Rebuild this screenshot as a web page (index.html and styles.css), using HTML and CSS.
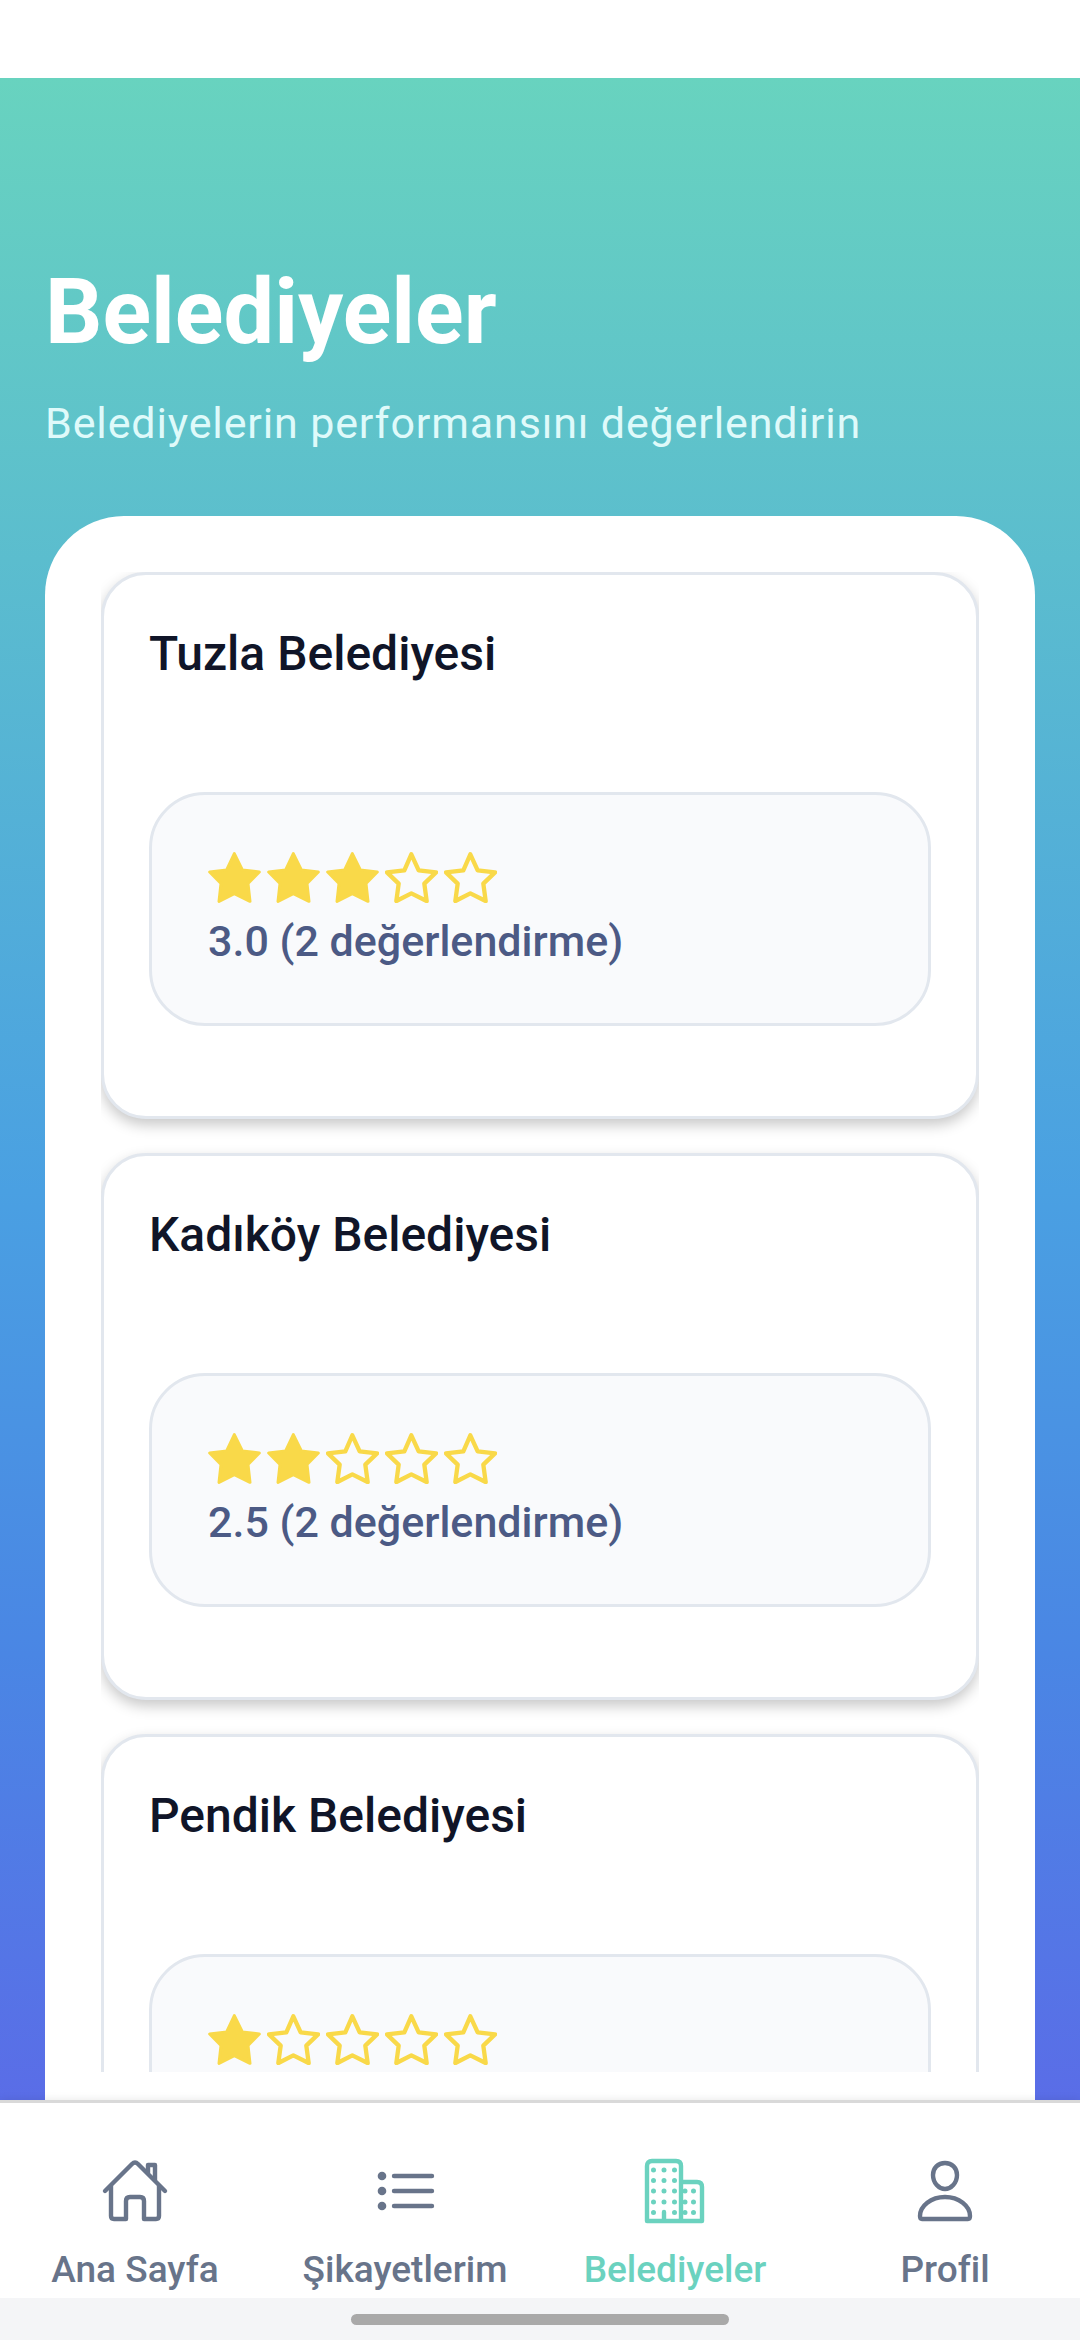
FILE: index.html
```html
<!DOCTYPE html>
<html lang="tr">
<head>
<meta charset="utf-8">
<meta name="viewport" content="width=device-width, initial-scale=1">
<title>Belediyeler</title>
<link rel="stylesheet" href="styles.css">
</head>
<body>
<svg class="defs" aria-hidden="true">
  <symbol id="star-full" viewBox="0 0 159 153">
    <path class="star-fill" d="M79 5 103 54 154 60 120 94 126 148 79 125 33 148 39 94 5 60 56 54Z"/>
  </symbol>
  <symbol id="star-empty" viewBox="0 0 159 153">
    <path class="star-line" d="M79 7 101 55 153 61 118 95 125 147 79 124 34 147 41 95 6 61 58 55Z"/>
  </symbol>
</svg>
<div class="screen">
  <header class="header">
    <h1 class="title">Belediyeler</h1>
    <p class="subtitle">Belediyelerin performansını değerlendirin</p>
  </header>
  <main class="panel">
    <div class="list">
      <article class="card">
        <h2 class="name">Tuzla Belediyesi</h2>
        <div class="rating">
          <div class="stars">
            <svg class="star"><use href="#star-full"/></svg>
            <svg class="star"><use href="#star-full"/></svg>
            <svg class="star"><use href="#star-full"/></svg>
            <svg class="star"><use href="#star-empty"/></svg>
            <svg class="star"><use href="#star-empty"/></svg>
          </div>
          <p class="score">3.0 (2 değerlendirme)</p>
        </div>
      </article>
      <article class="card">
        <h2 class="name">Kadıköy Belediyesi</h2>
        <div class="rating">
          <div class="stars">
            <svg class="star"><use href="#star-full"/></svg>
            <svg class="star"><use href="#star-full"/></svg>
            <svg class="star"><use href="#star-empty"/></svg>
            <svg class="star"><use href="#star-empty"/></svg>
            <svg class="star"><use href="#star-empty"/></svg>
          </div>
          <p class="score">2.5 (2 değerlendirme)</p>
        </div>
      </article>
      <article class="card">
        <h2 class="name">Pendik Belediyesi</h2>
        <div class="rating">
          <div class="stars">
            <svg class="star"><use href="#star-full"/></svg>
            <svg class="star"><use href="#star-empty"/></svg>
            <svg class="star"><use href="#star-empty"/></svg>
            <svg class="star"><use href="#star-empty"/></svg>
            <svg class="star"><use href="#star-empty"/></svg>
          </div>
        </div>
      </article>
    </div>
  </main>
</div>
<nav class="tabs">
  <a class="tab" href="#ana-sayfa">
    <svg class="icon" viewBox="0 0 68 68">
      <path d="M4 34 31 7Q34 4 37 7L64 34"/>
      <path d="M10 29V59Q10 62 13 62H25V44Q25 40 29 40H39Q43 40 43 44V62H55Q58 62 58 59V29"/>
      <path d="M47 16V8H54V23"/>
    </svg>
    <span>Ana Sayfa</span>
  </a>
  <a class="tab" href="#sikayetlerim">
    <svg class="icon" viewBox="0 0 68 68">
      <path d="M23 19H61M23 34H61M23 49H61"/>
      <g class="solid"><circle cx="11" cy="19" r="4.300"/><circle cx="11" cy="34" r="4.300"/><circle cx="11" cy="49" r="4.300"/></g>
    </svg>
    <span>Şikayetlerim</span>
  </a>
  <a class="tab tab-active" href="#belediyeler" aria-current="page">
    <svg class="icon" viewBox="0 0 68 68">
      <path d="M6 64V9Q6 4 11 4H35Q40 4 40 9V64ZM40 25H56Q61 25 61 30V64H40M23 64V55"/>
      <path class="dots" d="M12.500 13h0M23 13h0M33.500 13h0M12.500 23.500h0M23 23.500h0M33.500 23.500h0M12.500 34h0M23 34h0M33.500 34h0M12.500 45h0M23 45h0M33.500 45h0M12.500 55.500h0M33.500 55.500h0M44 34h0M52.500 34h0M44 45h0M52.500 45h0M44 55.500h0M52.500 55.500h0"/>
    </svg>
    <span>Belediyeler</span>
  </a>
  <a class="tab" href="#profil">
    <svg class="icon" viewBox="0 0 68 68">
      <path d="M34 6C41 6 46 11 46 18C46 26 40 32 34 32C28 32 22 26 22 18C22 11 27 6 34 6Z"/>
      <path d="M9 59C9 49 20 40 34 40C48 40 59 49 59 59Q59 62 57 62H11Q9 62 9 59Z"/>
    </svg>
    <span>Profil</span>
  </a>
</nav>
<div class="gesture"><div class="handle"></div></div>
</body>
</html>
```
FILE: styles.css
```css
* {
  box-sizing: border-box;
  margin: 0;
}

body {
  display: flex;
  flex-direction: column;
  height: 100vh;
  padding-top: 78px;
  background: #fff;
  font-family: Roboto, "Noto Sans", sans-serif;
}

.defs {
  display: none;
}

.screen {
  flex: 1;
  min-height: 0;
  display: flex;
  flex-direction: column;
  padding: 182px 45px 0;
  background: linear-gradient(#68d3bf, #4aa0e2 55%, #4a86e4 78%, #5a6de7);
}

.header {
  padding-bottom: 68px;
}

.title {
  font-size: 90px;
  line-height: 106px;
  font-weight: 700;
  color: #fff;
}

.subtitle {
  margin-top: 32px;
  font-size: 43px;
  line-height: 50px;
  letter-spacing: 0.02em;
  color: #dffafa;
}

.panel {
  flex: 1;
  min-height: 0;
  padding: 56px 56px 28px;
  border-radius: 79px 79px 0 0;
  background: #fff;
}

.list {
  display: flex;
  flex-direction: column;
  gap: 34px;
  height: 100%;
  overflow-y: auto;
  scrollbar-width: none;
}

.card {
  flex: none;
  padding: 45px 45px 90px;
  border: 3px solid #e2e7ee;
  border-radius: 45px;
  background: #fff;
  box-shadow: 0 6px 14px rgba(0, 0, 0, .22);
}

.name {
  margin-bottom: 104px;
  font-size: 48px;
  line-height: 68px;
  font-weight: 500;
  color: #101528;
}

.rating {
  min-height: 234px;
  padding: 56px;
  border: 3px solid #e2e7ee;
  border-radius: 56px;
  background: #f9fafc;
}

.stars {
  display: flex;
  gap: 6px;
  padding: 1px 0 13px;
}

.star {
  width: 53px;
  height: 51px;
}

.star-fill,
.star-line {
  fill: #f9d949;
  stroke: #f9d949;
  stroke-width: 9;
  stroke-linejoin: round;
}

.star-line {
  fill: none;
  stroke-width: 13;
}

.score {
  font-size: 43px;
  line-height: 50px;
  font-weight: 500;
  color: #4c5a85;
}

.tabs {
  display: flex;
  padding: 54px 0 0;
  border-top: 3px solid #d9d9d9;
  background: #fff;
  box-shadow: 0 -1px 8px rgba(0, 0, 0, .08);
}

.tab {
  flex: 1;
  display: flex;
  flex-direction: column;
  align-items: center;
  gap: 23px;
  padding-bottom: 6px;
  font-size: 37px;
  line-height: 44px;
  font-weight: 500;
  color: #68748a;
  text-decoration: none;
}

.tab-active {
  color: #6bd2bf;
}

.icon {
  width: 68px;
  height: 68px;
  fill: none;
  stroke: currentColor;
  stroke-width: 4.4;
  stroke-linecap: round;
  stroke-linejoin: round;
}

.solid {
  fill: currentColor;
  stroke: none;
}

.dots {
  stroke-width: 5;
}

.gesture {
  display: flex;
  justify-content: center;
  padding: 16px 0 15px;
  background: #f4f5f7;
}

.handle {
  width: 35%;
  height: 11px;
  border-radius: 6px;
  background: #a9a9a9;
}
```
